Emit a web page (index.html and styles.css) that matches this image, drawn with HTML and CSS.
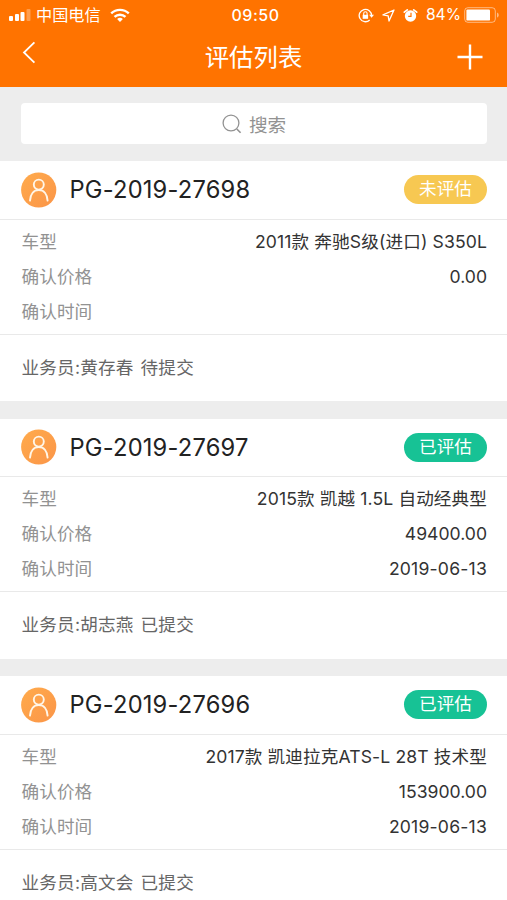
FILE: index.html
```html
<!DOCTYPE html>
<html lang="zh-CN">
<head>
  <meta charset="UTF-8">
  <title>评估列表</title>
  <link rel="stylesheet" href="styles.css">
</head>
<body>
<svg class="sprite">
  <defs>
    <linearGradient id="laranja" x1="0" y1="0" x2="1" y2="1">
      <stop offset="0" stop-color="#ffab4c"/>
      <stop offset="1" stop-color="#fb9548"/>
    </linearGradient>
    <symbol id="avatar" viewBox="0 0 36 36">
      <circle cx="17.7" cy="18" r="17.6" fill="url(#laranja)"/>
      <circle cx="17.8" cy="12.6" r="5" fill="none" stroke="#fff6e8" stroke-width="1.9"/>
      <path d="M9 28.6c.4-6.6 3.8-10.6 8.8-10.6s8.4 4 8.8 10.6" fill="none" stroke="#fff6e8" stroke-width="1.9" stroke-linecap="round"/>
    </symbol>
  </defs>
</svg>

<header class="header">
  <div class="status-bar">
    <div class="status-left">
      <svg class="signal" width="23" height="14" viewBox="0 0 23 14" fill="#fff">
        <rect x="0" y="8" width="4" height="5" rx="1"/>
        <rect x="6" y="6" width="4" height="7" rx="1"/>
        <rect x="11.5" y="4" width="4" height="9" rx="1"/>
        <rect x="17.5" y="1" width="4" height="12" rx="1" opacity=".3"/>
      </svg>
      <span class="carrier">中国电信</span>
      <svg class="wifi" width="20" height="15" viewBox="0 0 20 15" fill="none" stroke="#fff" stroke-width="2.4">
        <path d="M1.2 5.4a12.7 12.7 0 0 1 17.6 0"/>
        <path d="M4.5 8.9a8 8 0 0 1 11 0"/>
        <path d="M10 14l-2.9-2.9a4.3 4.3 0 0 1 5.8 0z" fill="#fff" stroke="none"/>
      </svg>
    </div>
    <div class="time">09:50</div>
    <div class="status-right">
      <svg class="lock" width="17" height="15" viewBox="0 0 17 15" fill="none" stroke="#fff" stroke-width="1.3">
        <path d="M11.7 12A6.2 6.2 0 1 1 13.6 7.6"/>
        <path d="M11.2 6.8h4.8l-2.4 3z" fill="#fff" stroke="none"/>
        <rect x="4.7" y="6.8" width="5.4" height="4" fill="#fff" stroke="none"/>
        <path d="M5.7 7V5.4a1.7 1.7 0 0 1 3.4 0V7" stroke-width="1.1"/>
      </svg>
      <svg class="arrow" width="13" height="13" viewBox="0 0 13 13" fill="none" stroke="#fff" stroke-width="1.3" stroke-linejoin="round">
        <path d="M12 1L1 5.9l5.2.9.8 5.2z"/>
      </svg>
      <svg class="alarm" width="15" height="15" viewBox="0 0 15 15" fill="none" stroke="#fff">
        <circle cx="7.5" cy="8" r="5.7" fill="#fff" stroke="none"/>
        <path d="M1.3 4.2L4.3 1.8M13.7 4.2l-3-2.4" stroke-width="1.7" stroke-linecap="round"/>
        <path d="M8 4.7v3.7H5.2" stroke="#ff7300" stroke-width="1.2"/>
      </svg>
      <span class="percent">84%</span>
      <svg class="battery" width="36" height="16" viewBox="0 0 36 16" fill="none">
        <rect x=".7" y=".7" width="30.6" height="14.6" rx="3.2" stroke="#fff" stroke-opacity=".5"/>
        <rect x="2.4" y="2.4" width="23.6" height="11.2" rx="1.2" fill="#fff"/>
        <path d="M33 5.4c2.3 1 2.3 4.2 0 5.2z" fill="#fff" fill-opacity=".5"/>
      </svg>
    </div>
  </div>
  <div class="nav-bar">
    <svg class="back" width="14" height="23" viewBox="0 0 14 23" fill="none" stroke="#fff" stroke-width="1.8">
      <path d="M12.4 1.3L2 11.5l10.4 10.2"/>
    </svg>
    <h1>评估列表</h1>
    <svg class="add" width="26" height="26" viewBox="0 0 26 26" stroke="#fff" stroke-width="2.4">
      <path d="M.5 13h25M13 .5v25"/>
    </svg>
  </div>
</header>

<div class="search">
  <div class="search-box">
    <svg width="20" height="20" viewBox="0 0 20 20" fill="none" stroke="#929292" stroke-width="1.3">
      <circle cx="9" cy="9" r="7.9"/>
      <path d="M14.8 15l3.8 3.8" stroke-width="1.6"/>
    </svg>
    <span>搜索</span>
  </div>
</div>

<main>
  <section class="card">
    <div class="card-head">
      <svg class="avatar"><use href="#avatar"/></svg>
      <h2>PG-2019-27698</h2>
      <span class="badge pending">未评估</span>
    </div>
    <div class="card-body">
      <div class="row"><span class="label">车型</span><span class="value model">2011款 奔驰S级(进口) S350L</span></div>
      <div class="row"><span class="label">确认价格</span><span class="value">0.00</span></div>
      <div class="row"><span class="label">确认时间</span><span class="value date"></span></div>
    </div>
    <div class="card-foot"><span>业务员:黄存春</span><span>待提交</span></div>
  </section>

  <section class="card">
    <div class="card-head">
      <svg class="avatar"><use href="#avatar"/></svg>
      <h2>PG-2019-27697</h2>
      <span class="badge done">已评估</span>
    </div>
    <div class="card-body">
      <div class="row"><span class="label">车型</span><span class="value model">2015款 凯越 1.5L 自动经典型</span></div>
      <div class="row"><span class="label">确认价格</span><span class="value">49400.00</span></div>
      <div class="row"><span class="label">确认时间</span><span class="value date">2019-06-13</span></div>
    </div>
    <div class="card-foot"><span>业务员:胡志燕</span><span>已提交</span></div>
  </section>

  <section class="card">
    <div class="card-head">
      <svg class="avatar"><use href="#avatar"/></svg>
      <h2>PG-2019-27696</h2>
      <span class="badge done">已评估</span>
    </div>
    <div class="card-body">
      <div class="row"><span class="label">车型</span><span class="value model">2017款 凯迪拉克ATS-L 28T 技术型</span></div>
      <div class="row"><span class="label">确认价格</span><span class="value">153900.00</span></div>
      <div class="row"><span class="label">确认时间</span><span class="value date">2019-06-13</span></div>
    </div>
    <div class="card-foot"><span>业务员:高文会</span><span>已提交</span></div>
  </section>
</main>
</body>
</html>
```
FILE: styles.css
```css
* {
  box-sizing: border-box;
}
body {
  margin: 0;
  height: 900px;
  overflow: hidden;
  background: #ededed;
  font-family: Inter, "Noto Sans CJK SC", sans-serif;
  color: #333;
}
svg {
  display: block;
  flex: none;
}
.sprite {
  width: 0;
  height: 0;
  float: left;
}
.header {
  height: 87px;
  background: #ff7300;
  color: #fff;
}
.status-bar {
  display: grid;
  grid-template-columns: 1fr auto 1fr;
  align-items: center;
  height: 30px;
  padding: 0 7px 0 9px;
  font-size: 16px;
  line-height: 30px;
}
.status-left,
.status-right {
  display: flex;
  align-items: center;
}
.status-right {
  justify-content: flex-end;
}
.carrier {
  margin-left: 4px;
  font-size: 16.2px;
}
.wifi {
  margin-left: 9px;
}
.time {
  padding-left: 2px;
  font-size: 16px;
  font-weight: 500;
  letter-spacing: 0.5px;
}
.arrow {
  margin-left: 7px;
}
.alarm {
  margin: 0 8px;
}
.percent {
  font-size: 15.6px;
}
.battery {
  margin-left: 3px;
}
.nav-bar {
  display: flex;
  justify-content: space-between;
  align-items: center;
  height: 54px;
  padding: 0 24px 0 22px;
}
.back {
  margin: -10px 12px 0 0;
}
h1 {
  margin: 0 0 0 2px;
  font-size: 24.4px;
  font-weight: 400;
  line-height: 54px;
}
.search {
  height: 74px;
  padding: 16px 20px 17px 21px;
}
.search-box {
  display: flex;
  justify-content: center;
  align-items: center;
  gap: 7px;
  height: 41px;
  background: #fff;
  border-radius: 4px;
  color: #929292;
  font-size: 18.6px;
}
.card {
  height: 240px;
  margin-bottom: 17.5px;
  background: #fff;
}
.card-head {
  display: flex;
  align-items: center;
  height: 58.5px;
  padding: 0 20px 0 21px;
  border-bottom: 1px solid #e9e9e9;
}
.avatar {
  width: 36px;
  height: 36px;
}
h2 {
  margin: 0 auto 0 12.5px;
  font-size: 23.7px;
  font-weight: 400;
  letter-spacing: 0.2px;
  color: #222;
}
.badge {
  width: 83px;
  height: 29px;
  border-radius: 15px;
  color: #fff;
  font-size: 17.6px;
  line-height: 28px;
  text-align: center;
}
.pending {
  background: #f7c852;
}
.done {
  background: #17c295;
}
.card-body {
  height: 115px;
  padding: 4px 20px 0 21.5px;
  border-bottom: 1px solid #e9e9e9;
}
.row {
  display: flex;
  justify-content: space-between;
  height: 35px;
  font-size: 17.6px;
  line-height: 35px;
}
.label {
  letter-spacing: 0.1px;
  color: #929292;
}
.model {
  letter-spacing: 0.12px;
}
.date {
  letter-spacing: 0.2px;
}
.card-foot {
  display: flex;
  gap: 7px;
  height: 66px;
  padding: 0 21.5px;
  color: #666;
  font-size: 17.6px;
  letter-spacing: 0.2px;
  line-height: 66px;
}
```
